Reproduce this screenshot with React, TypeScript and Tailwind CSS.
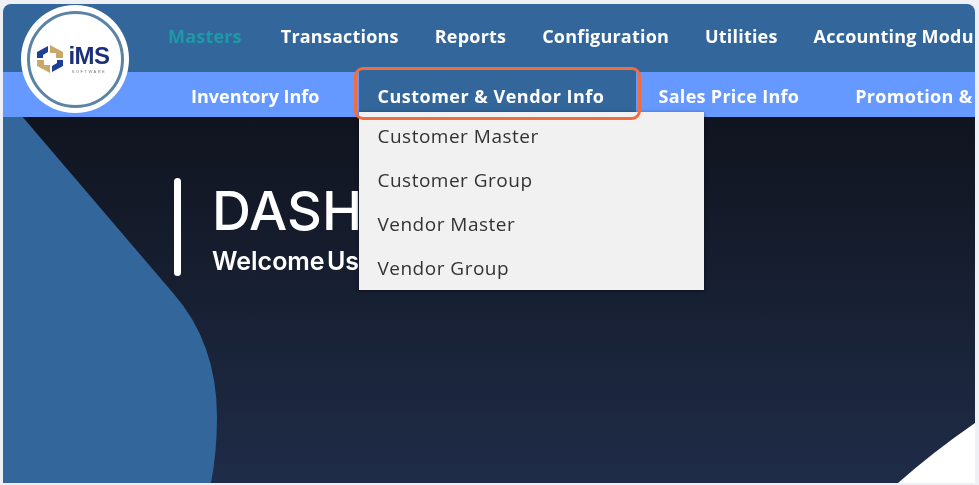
const topMenu = ["Transactions", "Reports", "Configuration", "Utilities", "Accounting Module"];
const dropdownItems = ["Customer Master", "Customer Group", "Vendor Master", "Vendor Group"];

function Logo() {
  return (
    <div className="absolute left-[18px] top-px z-20 flex h-[108px] w-[108px] items-center justify-center rounded-full bg-white">
      <div className="flex h-[97px] w-[97px] items-center justify-center gap-[5px] rounded-full border-[3px] border-[#5b83a6] pr-[3px]">
        <svg width="26" height="28" viewBox="0 0 26 28">
          <path d="M13 0 L26 7 L26 13 L19 13 L19 8 L13 8 Z" fill="#c9a86a" />
          <path d="M13 28 L0 21 L0 15 L7 15 L7 20 L13 20 Z" fill="#c9a86a" />
          <path d="M0 7 L11 1 L11 7 L6 10 L6 13 L0 13 Z" fill="#1d3f94" />
          <path d="M26 21 L15 27 L15 21 L20 18 L20 15 L26 15 Z" fill="#1d3f94" />
        </svg>
        <div className="flex flex-col items-center font-['Liberation_Sans',sans-serif] leading-none text-[#1d2f7a]">
          <span className="text-[24px] font-bold tracking-[-0.5px]">iMS</span>
          <span className="mt-[2px] text-[4px] tracking-[1.5px] text-[#777]">SOFTWARE</span>
        </div>
      </div>
    </div>
  );
}

export default function App() {
  return (
    <div className="h-[485px] w-[979px] overflow-hidden bg-[#eef0f6] pb-0.5 pl-[3px] pr-1 pt-1 font-['Open_Sans',sans-serif] blur-[0.5px]">
      <div className="relative flex h-full flex-col overflow-hidden rounded-t-lg">
        {/* Top menu */}
        <div className="flex h-[68px] shrink-0 items-center gap-[36px] whitespace-nowrap bg-[#33669a] pb-[3px] pl-[165px] text-[18px] font-bold tracking-[0.2px] text-white">
          <span className="mr-[3px] text-[#1c9aa8]">Masters</span>
          {topMenu.map((item) => (
            <span key={item}>{item}</span>
          ))}
        </div>

        {/* Sub menu */}
        <div className="relative z-10 flex h-[45px] shrink-0 items-center whitespace-nowrap bg-[#6699ff] pl-[188px] pt-[3px] text-[18px] font-bold tracking-[0.3px] text-white">
          <span className="tracking-normal">Inventory Info</span>
          <div className="relative ml-[40px] mr-[22px] -mt-[7px] h-[44px] self-start bg-[#33669a] pl-[18px] pr-[32px] pt-[16px] leading-[25px] tracking-[0.5px]">
            Customer &amp; Vendor Info
            <div className="absolute left-0 top-full w-[345px] bg-[#f1f1f1] pt-[2px] text-[19px] font-normal leading-[44px] tracking-[0.5px] text-[#333333] shadow-[0_1px_4px_rgba(0,0,0,0.45)]">
              {dropdownItems.map((item) => (
                <div key={item} className="pl-[18px]">
                  {item}
                </div>
              ))}
            </div>
          </div>
          <span>Sales Price Info</span>
          <span className="ml-[56px]">Promotion &amp; Discount</span>
        </div>

        {/* Dashboard area */}
        <div className="relative flex-1 overflow-hidden bg-gradient-to-b from-[#10141f] to-[#1f2c48]">
          <svg className="absolute left-0 top-0" width="972" height="366" viewBox="0 0 972 366">
            <path d="M0 -2 L18 -2 L170 176 Q 214 226 214 300 Q 214 335 208 366 L0 366 Z" fill="#33669a" />
            <path d="M972 306 L972 366 L895 366 Q 930 335 972 306 Z" fill="#ffffff" />
          </svg>

          <div className="relative ml-[171px] mt-[61px] flex gap-[31px]">
            <div className="h-[98px] w-[7px] rounded-full bg-white" />
            <div className="text-white">
              <h1 className="mt-px font-['Inter',sans-serif] text-[54px] font-medium leading-[64px]">DASHBOARD</h1>
              <p className="mt-[2px] font-['Inter',sans-serif] text-[25px] font-semibold leading-[32px] [word-spacing:-4px]">Welcome User</p>
            </div>
          </div>
        </div>

        <Logo />

        {/* Callout */}
        <div className="absolute left-[351px] top-[63px] z-20 h-[53px] w-[287px] rounded-[9px] border-[3px] border-[#f26d3d]" />
      </div>
    </div>
  );
}
